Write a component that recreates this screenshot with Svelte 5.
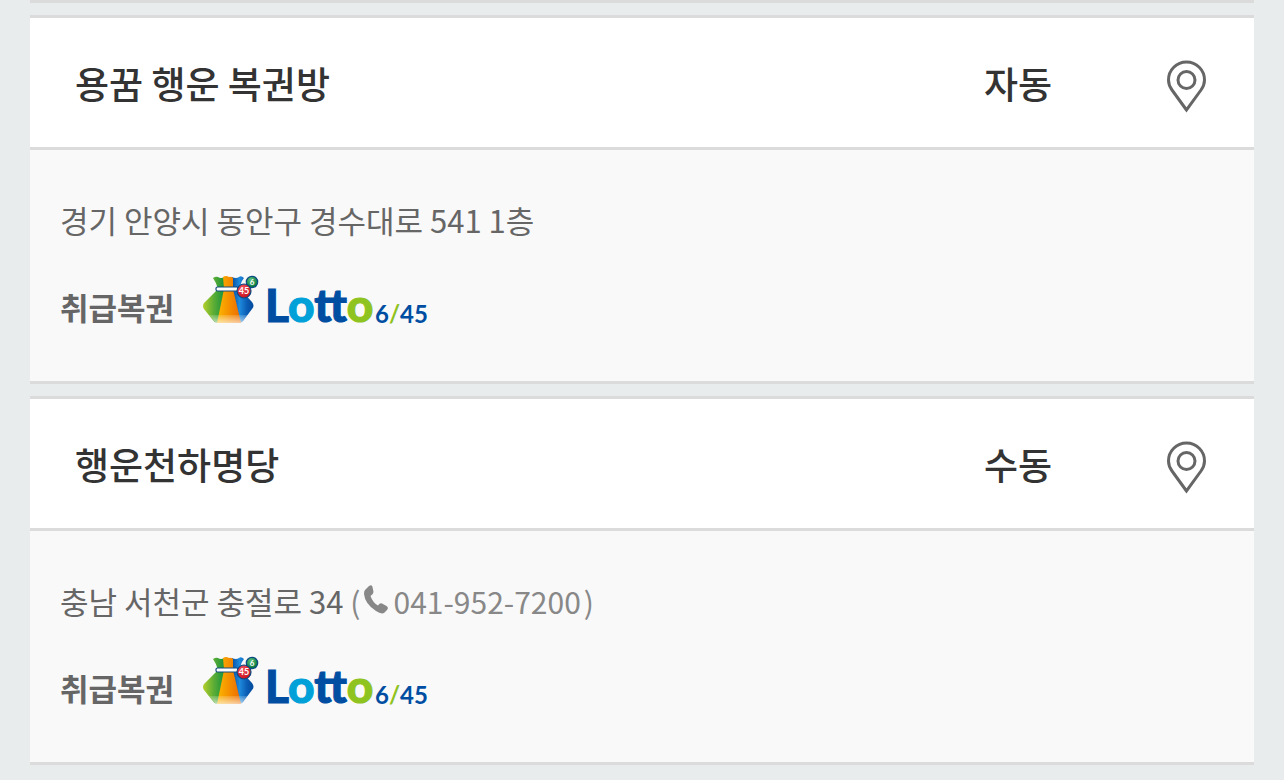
<script lang="ts">
    type Store = {
        name: string;
        type: string;
        address: string;
        tel?: string;
    };

    const stores: Store[] = [
        { name: "용꿈 행운 복권방", type: "자동", address: "경기 안양시 동안구 경수대로 541 1층" },
        { name: "행운천하명당", type: "수동", address: "충남 서천군 충절로 34", tel: "041-952-7200" },
    ];
</script>

{#snippet lottoLogo()}
    <svg class="logo" viewBox="0 0 224 50" role="img" aria-label="Lotto 6/45">
        <defs>
            <linearGradient id="bag-green" x1="0" x2="1">
                <stop offset="0" stop-color="#b5cf2b" />
                <stop offset="0.45" stop-color="#5fae35" />
                <stop offset="1" stop-color="#0d8f3c" />
            </linearGradient>
            <linearGradient id="bag-orange" x1="0" x2="1">
                <stop offset="0" stop-color="#fbb800" />
                <stop offset="0.5" stop-color="#f59000" />
                <stop offset="1" stop-color="#ea6a00" />
            </linearGradient>
            <linearGradient id="bag-blue" x1="0" x2="1">
                <stop offset="0" stop-color="#0a4da0" />
                <stop offset="0.35" stop-color="#1f8bdc" />
                <stop offset="0.7" stop-color="#0a5cb4" />
                <stop offset="1" stop-color="#044a9c" />
            </linearGradient>
            <linearGradient id="bag-fade" x1="0" x2="0" y1="0" y2="1">
                <stop offset="0" stop-color="#fff" stop-opacity="0.15" />
                <stop offset="1" stop-color="#fff" stop-opacity="0.65" />
            </linearGradient>
            <radialGradient id="ball-red" cx="0.4" cy="0.3" r="0.7">
                <stop offset="0" stop-color="#f2555c" />
                <stop offset="1" stop-color="#c9101d" />
            </radialGradient>
            <radialGradient id="ball-green" cx="0.4" cy="0.3" r="0.7">
                <stop offset="0" stop-color="#5dc07c" />
                <stop offset="1" stop-color="#00753a" />
            </radialGradient>
        </defs>
        <path fill="url(#bag-green)" d="M11 3 Q14 1 16 2 Q19 4 22 2 L24 13 L17 48 H15 Q12 47 10 44 L2 34 Q0 31 2 28 L16 14 Q14 7 11 3Z" />
        <path fill="url(#bag-blue)" d="M30 2 Q34 4 37 2 Q39 0 42 3 Q38 8 38 14 L50 27 Q53 31 50 34 L41 46 Q39 48 37 48 L30 14Z" />
        <path fill="url(#bag-orange)" d="M21 2 Q24 0 27 2 Q29 1 31 3 L31 14 L39 48 L15 48 L22 14Z" />
        <path fill="url(#bag-fade)" d="M7 40 H46 L39 48 H14Z" />
        <rect x="14" y="12" width="22" height="4" rx="1.5" fill="#fff" stroke="#114c80" stroke-width="1.2" />
        <circle cx="50" cy="7" r="5.7" fill="url(#ball-green)" stroke="#0a4a84" stroke-width="1.2" />
        <circle cx="42" cy="16" r="7" fill="url(#ball-red)" stroke="#0a4a84" stroke-width="1.2" />
        <text class="ball" x="50" y="10" font-size="8">6</text>
        <text class="ball" x="42" y="19" font-size="9">45</text>
        <text class="word" x="63" y="47"><tspan class="navy">L</tspan><tspan class="sky">o</tspan><tspan class="navy">tt</tspan><tspan class="lime">o</tspan></text>
        <text class="numbers" x="173" y="48"><tspan class="navy">6</tspan><tspan class="lime">/</tspan><tspan class="navy">45</tspan></text>
    </svg>
{/snippet}

<ul class="store-list">
    {#each stores as store}
        <li class="store">
            <div class="store-head">
                <strong class="name">{store.name}</strong>
                <span class="type">{store.type}</span>
                <button class="map-btn" type="button" aria-label="{store.name} 지도 보기">
                    <svg class="pin" viewBox="0 0 40 52">
                        <path d="M20.500 51 L6 31 C3.500 27.500 2.500 24.500 2.500 21 C2.500 11 10.500 3 20.500 3 C30.500 3 38.500 11 38.500 21 C38.500 24.500 37.500 27.500 35 31 Z" />
                        <circle cx="20.500" cy="21" r="8.500" />
                    </svg>
                </button>
            </div>
            <div class="store-body">
                <p class="address">
                    {store.address}
                    {#if store.tel}
                        <span class="tel">(<a href="tel:{store.tel}"><svg class="phone" viewBox="0 0 24 29"><path d="M1 5 L5 1 Q8 -1 8.500 2 L9.500 7 Q9.500 9 6.500 11 Q9 18 14 20.500 Q16 17.500 18 18.500 L22.500 21 Q25 22.500 23 25 L20 28 Q17 29.500 12 26 Q1 19 0 9 Q0 6 1 5Z" /></svg>{store.tel}</a>)</span>
                    {/if}
                </p>
                <div class="lottery">
                    <strong class="label">취급복권</strong>
                    {@render lottoLogo()}
                </div>
            </div>
        </li>
    {/each}
</ul>

<style>
    :global(body) {
        margin: 0;
        background: #e8eced;
        font-family: "Noto Sans CJK KR", "Noto Sans", sans-serif;
    }
    .store-list {
        display: flex;
        flex-direction: column;
        gap: 12px;
        list-style: none;
        margin: 0 30px;
        padding: 12px 0 0;
        border-top: 3px solid #dbdbdb;
    }
    .store {
        border-top: 3px solid #dbdbdb;
        border-bottom: 3px solid #dbdbdb;
        background: #f9f9f9;
    }
    .store-head {
        display: grid;
        grid-template-columns: 1fr 200px 136px;
        align-items: center;
        padding: 37px 0 36px;
        background: #fff;
        border-bottom: 3px solid #dbdbdb;
        color: #333;
        font-size: 37px;
        line-height: 56px;
    }
    .name {
        padding-left: 45px;
        font-weight: 500;
    }
    .type {
        font-weight: 500;
        text-align: center;
    }
    .map-btn {
        display: flex;
        justify-content: center;
        padding: 4px 0 0;
        border: none;
        background: none;
        cursor: pointer;
    }
    .pin {
        width: 40px;
        height: 52px;
        overflow: visible;
        fill: none;
        stroke: #666;
        stroke-width: 3;
    }
    .store-body {
        padding: 46px 30px 56px;
        color: #666;
        font-size: 31px;
    }
    .address {
        margin: 0 0 31px;
        line-height: 48px;
    }
    .tel {
        color: #888;
        font-size: 30px;
    }
    .tel a {
        margin: 0 3px;
        color: #888;
        text-decoration: none;
    }
    .phone {
        width: 24px;
        height: 29px;
        margin-right: 6px;
        fill: #888;
    }
    .lottery {
        display: flex;
        align-items: flex-end;
        gap: 28px;
    }
    .label {
        font-weight: 700;
        line-height: 36px;
    }
    .logo {
        width: 224px;
        height: 50px;
        overflow: visible;
    }
    .ball {
        fill: #fff;
        font-family: Lato, sans-serif;
        font-weight: 700;
        text-anchor: middle;
    }
    .word {
        font-family: Lato, sans-serif;
        font-size: 46px;
        font-weight: 900;
        stroke-width: 1px;
    }
    .numbers {
        font-family: Lato, sans-serif;
        font-size: 24px;
        font-weight: 700;
    }
    .navy {
        fill: #004ea2;
    }
    .sky {
        fill: #00a0d8;
    }
    .lime {
        fill: #8fc31f;
    }
    .word .navy {
        stroke: #004ea2;
    }
    .word .sky {
        stroke: #00a0d8;
    }
    .word .lime {
        stroke: #8fc31f;
    }
</style>
